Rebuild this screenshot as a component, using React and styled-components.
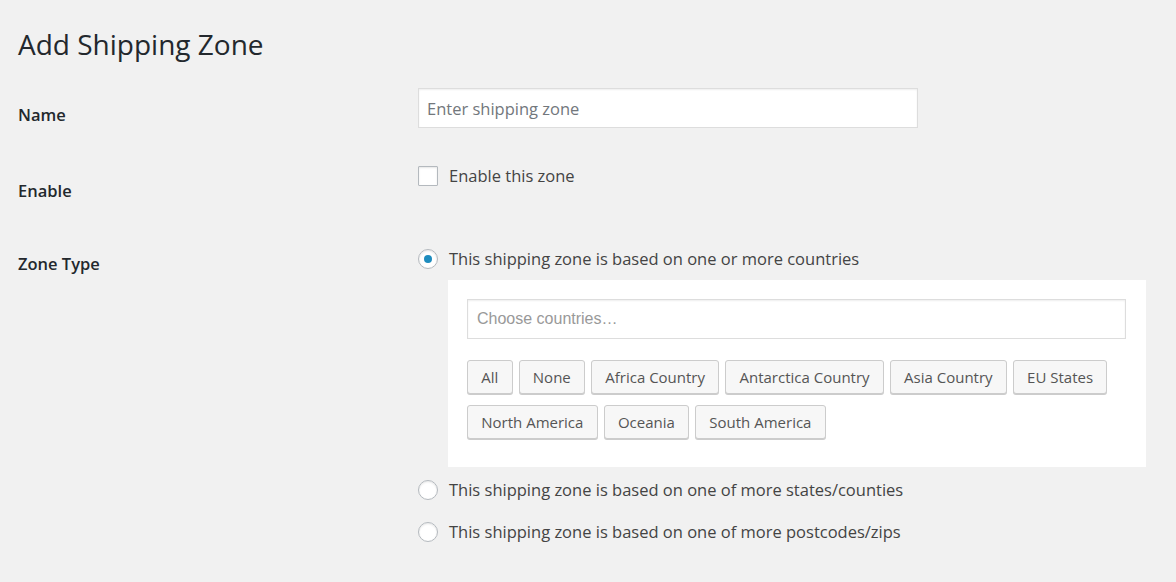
import styled, { createGlobalStyle } from 'styled-components';

const GlobalStyle = createGlobalStyle`
  html, body {
    margin: 0;
    background: #f1f1f1;
  }
  body {
    font-family: "Open Sans", "Noto Sans", sans-serif;
    color: #444;
  }
`

const regions = ['All', 'None', 'Africa Country', 'Antarctica Country', 'Asia Country', 'EU States', 'North America', 'Oceania', 'South America']

export default function App() {
    return (
        <>
            <GlobalStyle />
            <Page>
                <Title>Add Shipping Zone</Title>

                <FormRow>
                    <Label top={15}>Name</Label>
                    <Field top={0}>
                        <TextInput placeholder='Enter shipping zone' />
                    </Field>
                </FormRow>

                <FormRow>
                    <Label top={51}>Enable</Label>
                    <Field top={38}>
                        <Option>
                            <Checkbox />
                            <OptionText>Enable this zone</OptionText>
                        </Option>
                    </Field>
                </FormRow>

                <FormRow>
                    <Label top={49}>Zone Type</Label>
                    <Field top={46}>
                        <Option>
                            <Radio checked />
                            <OptionText>This shipping zone is based on one or more countries</OptionText>
                        </Option>

                        <Panel>
                            <CountryInput placeholder='Choose countries…' />
                            <ButtonList>
                                {regions.map(r => <RegionButton key={r}>{r}</RegionButton>)}
                            </ButtonList>
                        </Panel>

                        <OptionList>
                            <Option>
                                <Radio />
                                <OptionText>This shipping zone is based on one of more states/counties</OptionText>
                            </Option>
                            <Option>
                                <Radio />
                                <OptionText>This shipping zone is based on one of more postcodes/zips</OptionText>
                            </Option>
                        </OptionList>
                    </Field>
                </FormRow>
            </Page>
        </>
    )
}

const Page = styled.div`
    padding: 22px 30px 0 18px;
`

const Title = styled.h1`
    margin: 0 0 22px;
    font-size: 28px;
    line-height: 44px;
    font-weight: 400;
    color: #23282d;
`

const FormRow = styled.div`
    display: grid;
    grid-template-columns: 400px 1fr;
    align-items: start;
`

const Label = styled.div`
    padding-top: ${p => p.top}px;
    font-size: 16.5px;
    font-weight: 600;
    line-height: 24px;
    color: #23282d;
`

const Field = styled.div`
    padding-top: ${p => p.top}px;
    display: flex;
    flex-direction: column;
`

const TextInput = styled.input`
    box-sizing: border-box;
    width: 500px;
    height: 40px;
    padding: 0 8px;
    border: 1px solid #ddd;
    box-shadow: inset 0 1px 2px rgba(0,0,0,.07);
    background: #fff;
    font-family: "Open Sans", sans-serif;
    font-size: 16.5px;
    color: #32373c;
    outline: none;
    &::placeholder {
        color: #72777c;
    }
`

const Option = styled.label`
    display: flex;
    align-items: center;
    gap: 11px;
    font-size: 16.5px;
    line-height: 20px;
    color: #444;
`

const OptionText = styled.span`
    margin-top: -1px;
`

const Checkbox = styled.span`
    box-sizing: border-box;
    width: 20px;
    height: 20px;
    border: 1px solid #b4b9be;
    border-radius: 1px;
    background: #fff;
    box-shadow: inset 0 1px 2px rgba(0,0,0,.1);
    flex-shrink: 0;
`

const Radio = styled.span`
    box-sizing: border-box;
    width: 20px;
    height: 20px;
    border: 1px solid #b4b9be;
    border-radius: 50%;
    background: #fff;
    box-shadow: inset 0 1px 2px rgba(0,0,0,.1);
    flex-shrink: 0;
    display: flex;
    align-items: center;
    justify-content: center;
    &::after {
        content: '';
        width: 8px;
        height: 8px;
        border-radius: 50%;
        background: ${p => p.checked ? '#1e8cbe' : 'transparent'};
    }
`

const Panel = styled.div`
    margin: 11px 0 0 30px;
    padding: 19px 20px 28px 19px;
    background: #fff;
`

const CountryInput = styled.input`
    box-sizing: border-box;
    width: 100%;
    height: 40px;
    padding: 0 9px;
    border: 1px solid #ddd;
    box-shadow: inset 0 1px 2px rgba(0,0,0,.07);
    font-family: "Liberation Sans", Arial, sans-serif;
    font-size: 16px;
    outline: none;
    &::placeholder {
        color: #999;
    }
`

const ButtonList = styled.div`
    display: flex;
    flex-wrap: wrap;
    gap: 11px 6px;
    margin-top: 21px;
`

const RegionButton = styled.button`
    height: 34px;
    padding: 0 13.25px;
    border: 1px solid #ccc;
    border-radius: 3px;
    background: #f7f7f7;
    box-shadow: 0 1px 0 #ccc;
    font-family: "Open Sans", sans-serif;
    font-size: 15px;
    color: #555;
    cursor: pointer;
`

const OptionList = styled.div`
    display: flex;
    flex-direction: column;
    gap: 22px;
    margin-top: 13px;
`
